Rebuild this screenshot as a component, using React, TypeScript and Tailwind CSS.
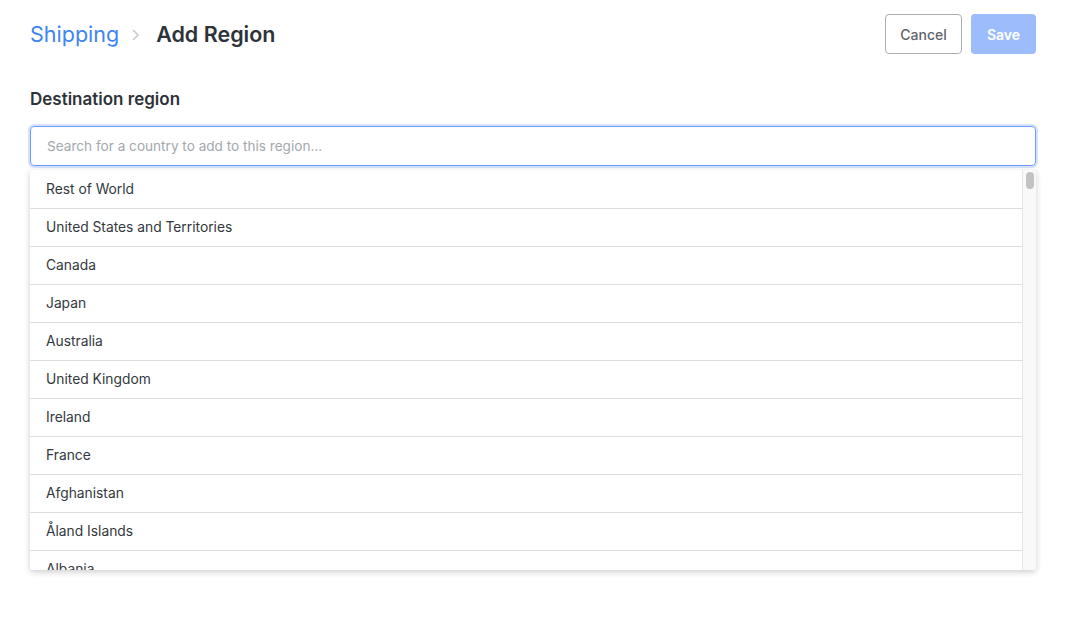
import React from "react";

const countries = [
  "Rest of World",
  "United States and Territories",
  "Canada",
  "Japan",
  "Australia",
  "United Kingdom",
  "Ireland",
  "France",
  "Afghanistan",
  "Åland Islands",
  "Albania",
];

export default function App() {
  return (
    <div
      className="w-[1066px] h-[624px] bg-white text-[#2d3339]"
      style={{ fontFamily: "Inter, 'Noto Sans', sans-serif" }}
    >
      <div className="flex items-center justify-between pl-[30px] pr-[30px] pt-[14px]">
        <div className="flex items-center text-[21.5px] leading-none pt-[2px]">
          <span className="text-[#3d84f5]">Shipping</span>
          <svg width="12" height="14" viewBox="0 0 12 14" className="ml-[11px] mr-[14px]">
            <path d="M3 2 L8 7 L3 12" fill="none" stroke="#c8cbcf" strokeWidth="1.6" />
          </svg>
          <span className="font-semibold text-[#2d3339]">Add Region</span>
        </div>
        <div className="flex gap-[9px]">
          <button className="h-[40px] w-[77px] rounded-[4px] border border-[#a9aeb3] bg-white text-[14px] font-medium text-[#5f656b]">
            Cancel
          </button>
          <button className="h-[40px] w-[65px] rounded-[4px] bg-[#9dbcfc] text-[14px] font-semibold text-white">
            Save
          </button>
        </div>
      </div>

      <div className="px-[30px] pt-[37px]">
        <div className="text-[17px] font-semibold leading-none text-[#2d3339]">Destination region</div>
        <div className="mt-[18px] h-[40px] rounded-[4px] border border-[#6f9cf7] shadow-[0_0_0_2px_#d6e2fc] flex items-center px-[16px]">
          <span className="text-[13.6px] text-[#a3a8ad]">Search for a country to add to this region...</span>
        </div>
        <div className="mt-[4px] h-[400px] flex rounded-[3px] bg-white shadow-[0_2px_6px_rgba(0,0,0,0.2)] overflow-hidden">
          <div className="flex-1 overflow-hidden">
            {countries.map((c, i) => (
              <div
                key={c}
                className={`h-[38px] flex items-center px-[16px] text-[13.8px] text-[#33383d] ${i > 0 ? "border-t border-[#dedede]" : "pt-[1px]"}`}
              >
                {c}
              </div>
            ))}
          </div>
          <div className="w-[14px] bg-[#f9f9f9] border-l border-[#e6e6e6] flex justify-center pt-[2px]">
            <div className="w-[8px] h-[17px] rounded-full bg-[#c2c2c2]" />
          </div>
        </div>
      </div>
    </div>
  );
}
